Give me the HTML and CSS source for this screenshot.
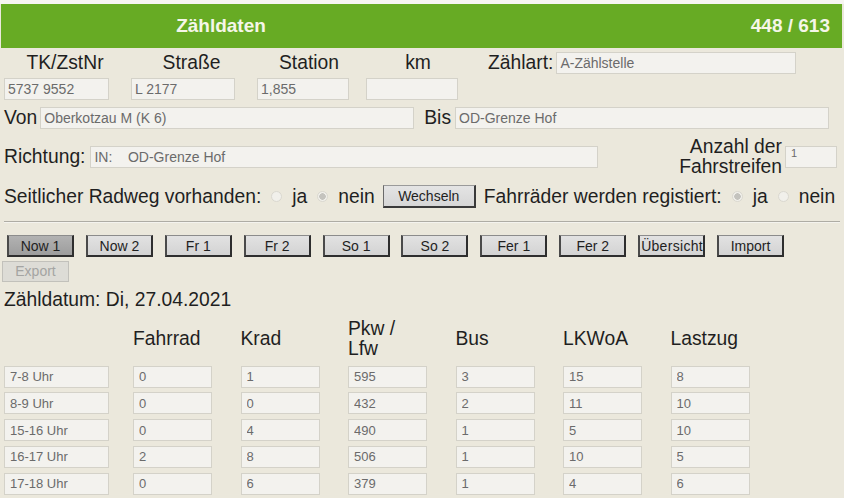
FILE: index.html
```html
<!DOCTYPE html>
<html lang="de">
<head>
    <meta charset="UTF-8">
    <meta name="viewport" content="width=device-width, initial-scale=1.0">
    <title>Zähldaten</title>
    <link rel="stylesheet" href="styles.css">
</head>
<body>
    <div class="page">
        <div class="header">
            <div class="title">Zähldaten</div>
            <div class="count">448 / 613</div>
        </div>

        <div class="form">
            <!-- Stammdaten der Zählstelle -->
            <div class="ids">
                <div class="lbl">TK/ZstNr</div>
                <div class="lbl">Straße</div>
                <div class="lbl">Station</div>
                <div class="lbl">km</div>
                <div class="zaehlart">
                    <span>Zählart:</span>
                    <input class="field w-art" value="A-Zählstelle" readonly>
                </div>
                <input class="field w-105" value="5737 9552" readonly>
                <input class="field w-104" value="L 2177" readonly>
                <input class="field w-92" value="1,855" readonly>
                <input class="field w-92" value="" readonly>
            </div>

            <div class="line">
                <span>Von</span>
                <input class="field w-374 von" value="Oberkotzau M (K 6)" readonly>
                <span class="bis">Bis</span>
                <input class="field w-374 bis-field" value="OD-Grenze Hof" readonly>
            </div>

            <div class="line richtung">
                <span>Richtung:</span>
                <input class="field w-508 richtung-field" value="IN:    OD-Grenze Hof" readonly>
                <span class="lanes">Anzahl der<br>Fahrstreifen</span>
                <input class="field w-52 lanes-field" value="1" readonly>
            </div>

            <div class="line radweg">
                <span>Seitlicher Radweg vorhanden:</span>
                <input type="radio" class="radio" name="radweg" disabled>
                <span>ja</span>
                <input type="radio" class="radio" name="radweg" checked disabled>
                <span>nein</span>
                <button class="switch">Wechseln</button>
                <span class="gap-left">Fahrräder werden registiert:</span>
                <input type="radio" class="radio" name="rad" checked disabled>
                <span>ja</span>
                <input type="radio" class="radio" name="rad" disabled>
                <span>nein</span>
            </div>

            <hr class="divider">

            <div class="tabs">
                <button class="tab active">Now 1</button>
                <button class="tab">Now 2</button>
                <button class="tab">Fr 1</button>
                <button class="tab">Fr 2</button>
                <button class="tab">So 1</button>
                <button class="tab">So 2</button>
                <button class="tab">Fer 1</button>
                <button class="tab">Fer 2</button>
                <button class="tab tight">Übersicht</button>
                <button class="tab">Import</button>
            </div>
            <div class="export-row">
                <button class="export" disabled>Export</button>
            </div>

            <div class="datum">Zähldatum: Di, 27.04.2021</div>

            <!-- Zählergebnisse je Stunde -->
            <div class="counts">
                <div class="head"></div>
                <div class="head">Fahrrad</div>
                <div class="head">Krad</div>
                <div class="head">Pkw /<br>Lfw</div>
                <div class="head">Bus</div>
                <div class="head">LKWoA</div>
                <div class="head">Lastzug</div>

                <input class="field cell w-105" value="7-8 Uhr" readonly>
                <input class="field cell num" value="0" readonly>
                <input class="field cell num" value="1" readonly>
                <input class="field cell num" value="595" readonly>
                <input class="field cell num" value="3" readonly>
                <input class="field cell num" value="15" readonly>
                <input class="field cell num" value="8" readonly>

                <input class="field cell w-105" value="8-9 Uhr" readonly>
                <input class="field cell num" value="0" readonly>
                <input class="field cell num" value="0" readonly>
                <input class="field cell num" value="432" readonly>
                <input class="field cell num" value="2" readonly>
                <input class="field cell num" value="11" readonly>
                <input class="field cell num" value="10" readonly>

                <input class="field cell w-105" value="15-16 Uhr" readonly>
                <input class="field cell num" value="0" readonly>
                <input class="field cell num" value="4" readonly>
                <input class="field cell num" value="490" readonly>
                <input class="field cell num" value="1" readonly>
                <input class="field cell num" value="5" readonly>
                <input class="field cell num" value="10" readonly>

                <input class="field cell w-105" value="16-17 Uhr" readonly>
                <input class="field cell num" value="2" readonly>
                <input class="field cell num" value="8" readonly>
                <input class="field cell num" value="506" readonly>
                <input class="field cell num" value="1" readonly>
                <input class="field cell num" value="10" readonly>
                <input class="field cell num" value="5" readonly>

                <input class="field cell w-105" value="17-18 Uhr" readonly>
                <input class="field cell num" value="0" readonly>
                <input class="field cell num" value="6" readonly>
                <input class="field cell num" value="379" readonly>
                <input class="field cell num" value="1" readonly>
                <input class="field cell num" value="4" readonly>
                <input class="field cell num" value="6" readonly>
            </div>
        </div>
    </div>
</body>
</html>
```

FILE: styles.css
```css
* {
    box-sizing: border-box;
}

body {
    margin: 0;
    background: #f6f5f1;
    font-family: 'Liberation Sans', Arial, sans-serif;
    color: #1f1f1f;
    overflow: hidden;
}

.page {
    margin-top: 4px;
    height: 494px;
    background: #ebe8dc;
}

.header {
    display: flex;
    align-items: center;
    width: 841px;
    height: 44px;
    margin-left: 1px;
    background: #67ab24;
    color: #f5f6e8;
    font-size: 19px;
    font-weight: bold;
}

.title {
    flex: 0 0 440px;
    text-align: center;
}

.count {
    margin-left: auto;
    padding-right: 12px;
}

.form {
    padding: 0 4px;
    font-size: 19.3px;
}

/* Eingabefelder */
.field {
    height: 22px;
    padding: 0 3px;
    border: 1px solid #d4d2c9;
    background: #f3f2ee;
    color: #6b6b6b;
    font-family: 'Liberation Sans', Arial, sans-serif;
    font-size: 14px;
    outline: none;
}

.field.cell {
    padding: 0 5px;
    font-size: 13px;
}

.w-105 { width: 105px; }
.w-104 { width: 104px; }
.w-92 { width: 92px; }
.w-art { width: 240px; }
.w-374 { width: 374px; }
.w-508 { width: 508px; }
.w-52 { width: 52px; }

.ids {
    display: grid;
    grid-template-columns: 122px 121px 104px 104px 1fr;
    grid-template-rows: 22px 22px;
    column-gap: 5px;
    row-gap: 4px;
    padding-top: 4px;
}

.lbl {
    line-height: 22px;
    text-align: center;
}

.zaehlart {
    display: flex;
    align-items: center;
    padding-left: 13px;
}

.zaehlart .field {
    margin-left: 3px;
}

.line {
    display: flex;
    align-items: center;
    height: 22px;
    margin-top: 7px;
}

.von {
    margin-left: 3px;
}

.bis {
    margin-left: 10px;
}

.bis-field {
    margin-left: 4px;
}

.richtung {
    height: 40px;
    margin-top: 8px;
    padding-right: 3px;
}

.richtung-field {
    margin-left: 5px;
}

.lanes {
    margin-left: auto;
    line-height: 20px;
    text-align: right;
}

.lanes-field {
    margin-left: 3px;
    padding: 0 5px 8px;
    font-size: 11px;
}

.radweg {
    height: 23px;
    margin-top: 8px;
}

.radio {
    appearance: none;
    width: 11px;
    height: 11px;
    margin: 0 10px;
    border: 1px solid #dad8d0;
    border-radius: 50%;
    background: #f1f0eb;
}

.radio:checked {
    background: radial-gradient(circle, #c4c3be 0 3px, #f1f0eb 3.5px);
}

.switch {
    width: 93px;
    height: 23px;
    margin-left: 8px;
    padding: 0;
    font-family: 'Liberation Sans', Arial, sans-serif;
    font-size: 14px;
    color: #1f1f1f;
    background: linear-gradient(#e4e4e4, #d6d6d6);
    border-style: solid;
    border-width: 1px 2px 2px 1px;
    border-color: #9a9a9a #3a3a3a #3a3a3a #6a6a6a;
}

.gap-left {
    margin-left: 8px;
}

.divider {
    width: 836px;
    margin: 13px 0 0;
    border: 0;
    border-top: 1px solid #aeaca4;
    border-bottom: 1px solid #f4f3ee;
}

/* Zählzeiträume */
.tabs {
    display: flex;
    gap: 11.9px;
    margin-top: 12px;
    padding-left: 3px;
}

.tab {
    width: 67px;
    height: 22px;
    padding: 0;
    font-family: 'Liberation Sans', Arial, sans-serif;
    font-size: 14px;
    color: #1f1f1f;
    background: linear-gradient(#e2e2e2, #d3d3d3);
    border-style: solid;
    border-width: 1px 2px 2px 2px;
    border-color: #8c8c8c #2e2e2e #2e2e2e #4a4a4a;
    white-space: nowrap;
    overflow: hidden;
}

.tab.active {
    background: linear-gradient(#b2b2b2, #9d9d9d);
}

.tab.tight {
    text-align: left;
    padding-left: 1px;
    letter-spacing: 0.3px;
}

.export-row {
    margin-top: 2px;
}

.export {
    width: 67px;
    height: 21px;
    margin-left: -2px;
    padding: 0;
    font-family: 'Liberation Sans', Arial, sans-serif;
    font-size: 14px;
    color: #a4a4a2;
    background: #dddcd6;
    border: 1px solid #c2c1bb;
}

.datum {
    margin-top: 7px;
    line-height: 22px;
}

.counts {
    display: grid;
    grid-template-columns: 129px repeat(6, 107.5px);
    grid-template-rows: 44.25px repeat(5, 22px);
    row-gap: 4.75px;
    margin-top: 6px;
}

.head {
    display: flex;
    align-items: center;
    line-height: 20px;
}

.num {
    width: 79px;
}
```
